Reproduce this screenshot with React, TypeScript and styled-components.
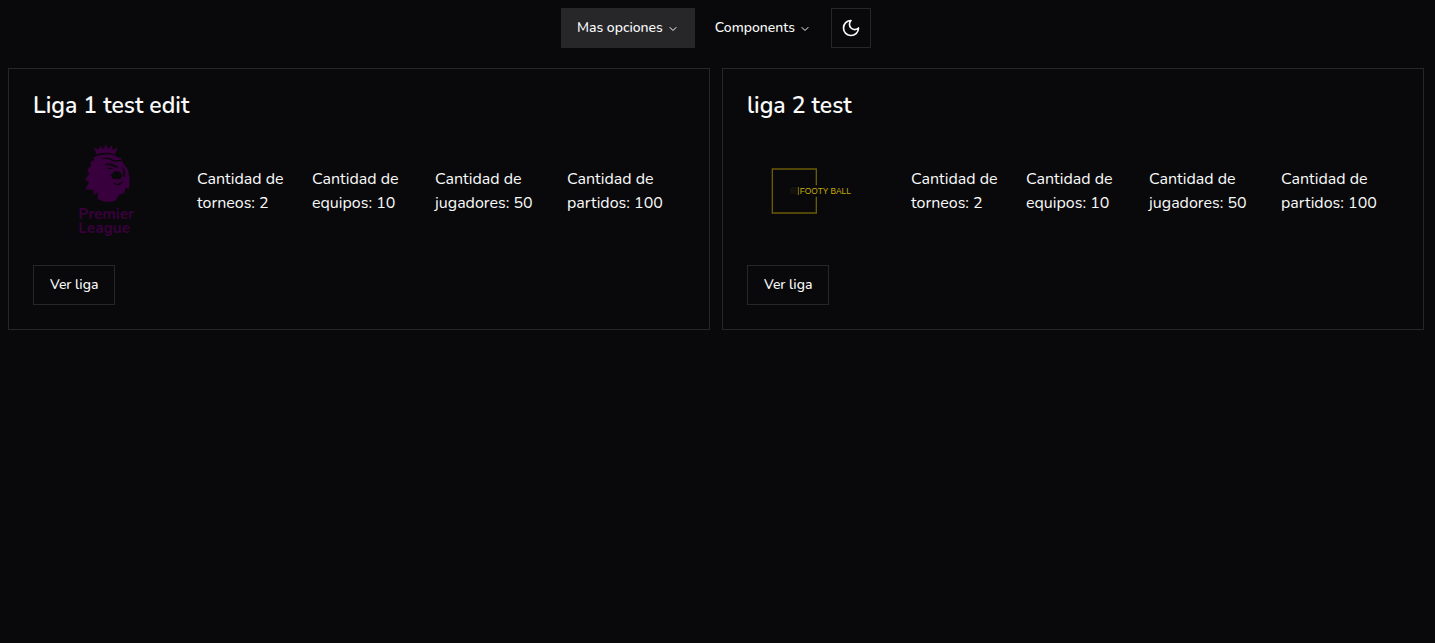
import React from "react";
import styled, { createGlobalStyle, css } from "styled-components";
import { ChevronDown } from "lucide-react";

const GlobalStyle = createGlobalStyle`
  *, *::before, *::after { box-sizing: border-box; }
  body {
    margin: 0;
    background: #09090b;
    color: #fafafa;
    font-family: Nunito, Lato, "Noto Sans", sans-serif;
    font-size: 16px;
    line-height: 24px;
  }
`;

const Page = styled.div`
  display: flex;
  flex-direction: column;
  gap: 20px;
  padding: 8px 11px 8px 8px;
`;

const NavBar = styled.nav`
  display: flex;
  justify-content: center;
  gap: 4px;
`;

const buttonBase = css`
  display: inline-flex;
  align-items: center;
  justify-content: center;
  height: 40px;
  border: 0;
  background: transparent;
  color: inherit;
  font: inherit;
  font-size: 14px;
  line-height: 20px;
  font-weight: 500;
  cursor: pointer;
`;

const MenuButton = styled.button<{ $active?: boolean }>`
  ${buttonBase}
  gap: 4px;
  padding: 8px 16px;
  background: ${(p) => (p.$active ? "#27272a" : "transparent")};

  svg {
    margin-top: 2px;
  }
`;

const IconButton = styled.button`
  ${buttonBase}
  width: 40px;
  border: 1px solid #27272a;
`;

const OutlineButton = styled.button`
  ${buttonBase}
  align-self: flex-start;
  padding: 8px 16px;
  border: 1px solid #27272a;
`;

const CardGrid = styled.main`
  display: grid;
  grid-template-columns: repeat(2, minmax(0, 1fr));
  gap: 12px;
`;

const Card = styled.article`
  display: flex;
  flex-direction: column;
  padding: 24px;
  border: 1px solid #27272a;
`;

const CardTitle = styled.h2`
  margin: 0 0 22px;
  font-size: 23px;
  line-height: 26px;
  font-weight: 600;
`;

const CardBody = styled.div`
  display: grid;
  grid-template-columns: 148fr 99fr 107fr 116fr 118fr;
  align-items: center;
  gap: 16px;
  margin-bottom: 24px;
`;

const Crest = styled.svg`
  display: block;
  width: 100px;
  height: 100px;
  justify-self: center;
`;

const Stat = styled.p`
  margin: 0;
`;

function MoonIcon() {
  return (
    <svg
      width="20"
      height="20"
      viewBox="0 0 24 24"
      fill="none"
      stroke="currentColor"
      strokeWidth="2"
      strokeLinecap="round"
      strokeLinejoin="round"
      aria-hidden
    >
      <path d="M12 3a6 6 0 0 0 9 9 9 9 0 1 1-9-9Z" />
    </svg>
  );
}

function LionLogo() {
  return (
    <Crest viewBox="-9 18 300 300" role="img" aria-label="Premier League">
      <g fill="#38003c">
        <path d="M109 58 L102 37 L116 44 L120 32 L130 43 L137 27 L145 43 L155 31 L158 44 L173 38 L165 58 Q138 49 109 58Z" />
        <path d="M100 67 Q132 52 165 61 L170 66 L184 70 L188 82 L196 92 L204 104 L209 134 L207 163 L198 158 L192 175 L178 179 L166 197 Q142 206 113 193 L113 172 L101 181 L100 165 L76 163 L87 142 L75 134 L87 118 L82 103 L93 92 L91 80 L103 76 Z" />
      </g>
      <g fill="#09090b">
        <path d="M124 72 Q136 66 148 69 L162 76 L184 74 L186 78 L162 80 L147 73 Q136 70 124 72Z" />
        <path d="M131 90 Q146 83 158 87 L176 95 L169 98 L150 91 Z" />
        <path d="M138 98 L152 98 L162 102 L148 102 Z" />
        <path d="M186 92 L196 108 L195 126 L190 124 L189 108 Z" />
        <path d="M152 120 L165 108 L180 111 L188 121 L180 133 L158 131 Z" />
        <path d="M158 142 L174 147 L188 138 L187 143 L177 151 L169 150 Z" />
      </g>
      <g fill="#38003c" fontFamily="Nunito, Lato, sans-serif" fontWeight="700" fontSize="46">
        <text x="55" y="252">Premier</text>
        <text x="55" y="293">League</text>
      </g>
    </Crest>
  );
}

function FootyLogo() {
  return (
    <Crest viewBox="48 -42 300 300" role="img" aria-label="Footy Ball">
      <path d="M184 91 V42 H52 V174 H184 V125" fill="none" stroke="#695b08" strokeWidth="4" />
      <path d="M108 98 V116 M114 96 V118 M121 96 V118" stroke="#19180d" strokeWidth="4" />
      <path d="M130 96 V120" stroke="#8b7908" strokeWidth="3" />
      <text x="134" y="117" fill="#c4ab08" fontFamily="'Liberation Sans', sans-serif" fontSize="25">
        FOOTY BALL
      </text>
    </Crest>
  );
}

const leagues = [
  { name: "Liga 1 test edit", Logo: LionLogo, torneos: 2, equipos: 10, jugadores: 50, partidos: 100 },
  { name: "liga 2 test", Logo: FootyLogo, torneos: 2, equipos: 10, jugadores: 50, partidos: 100 },
];

export default function App() {
  return (
    <>
      <GlobalStyle />
      <Page>
        <NavBar>
          <MenuButton type="button" $active>
            Mas opciones
            <ChevronDown size={12} strokeWidth={2} aria-hidden />
          </MenuButton>
          <MenuButton type="button">
            Components
            <ChevronDown size={12} strokeWidth={2} aria-hidden />
          </MenuButton>
          <IconButton type="button" aria-label="Toggle theme">
            <MoonIcon />
          </IconButton>
        </NavBar>
        <CardGrid>
          {leagues.map(({ name, Logo, torneos, equipos, jugadores, partidos }) => (
            <Card key={name}>
              <CardTitle>{name}</CardTitle>
              <CardBody>
                <Logo />
                <Stat>{`Cantidad de torneos: ${torneos}`}</Stat>
                <Stat>{`Cantidad de equipos: ${equipos}`}</Stat>
                <Stat>{`Cantidad de jugadores: ${jugadores}`}</Stat>
                <Stat>{`Cantidad de partidos: ${partidos}`}</Stat>
              </CardBody>
              <OutlineButton type="button">Ver liga</OutlineButton>
            </Card>
          ))}
        </CardGrid>
      </Page>
    </>
  );
}
